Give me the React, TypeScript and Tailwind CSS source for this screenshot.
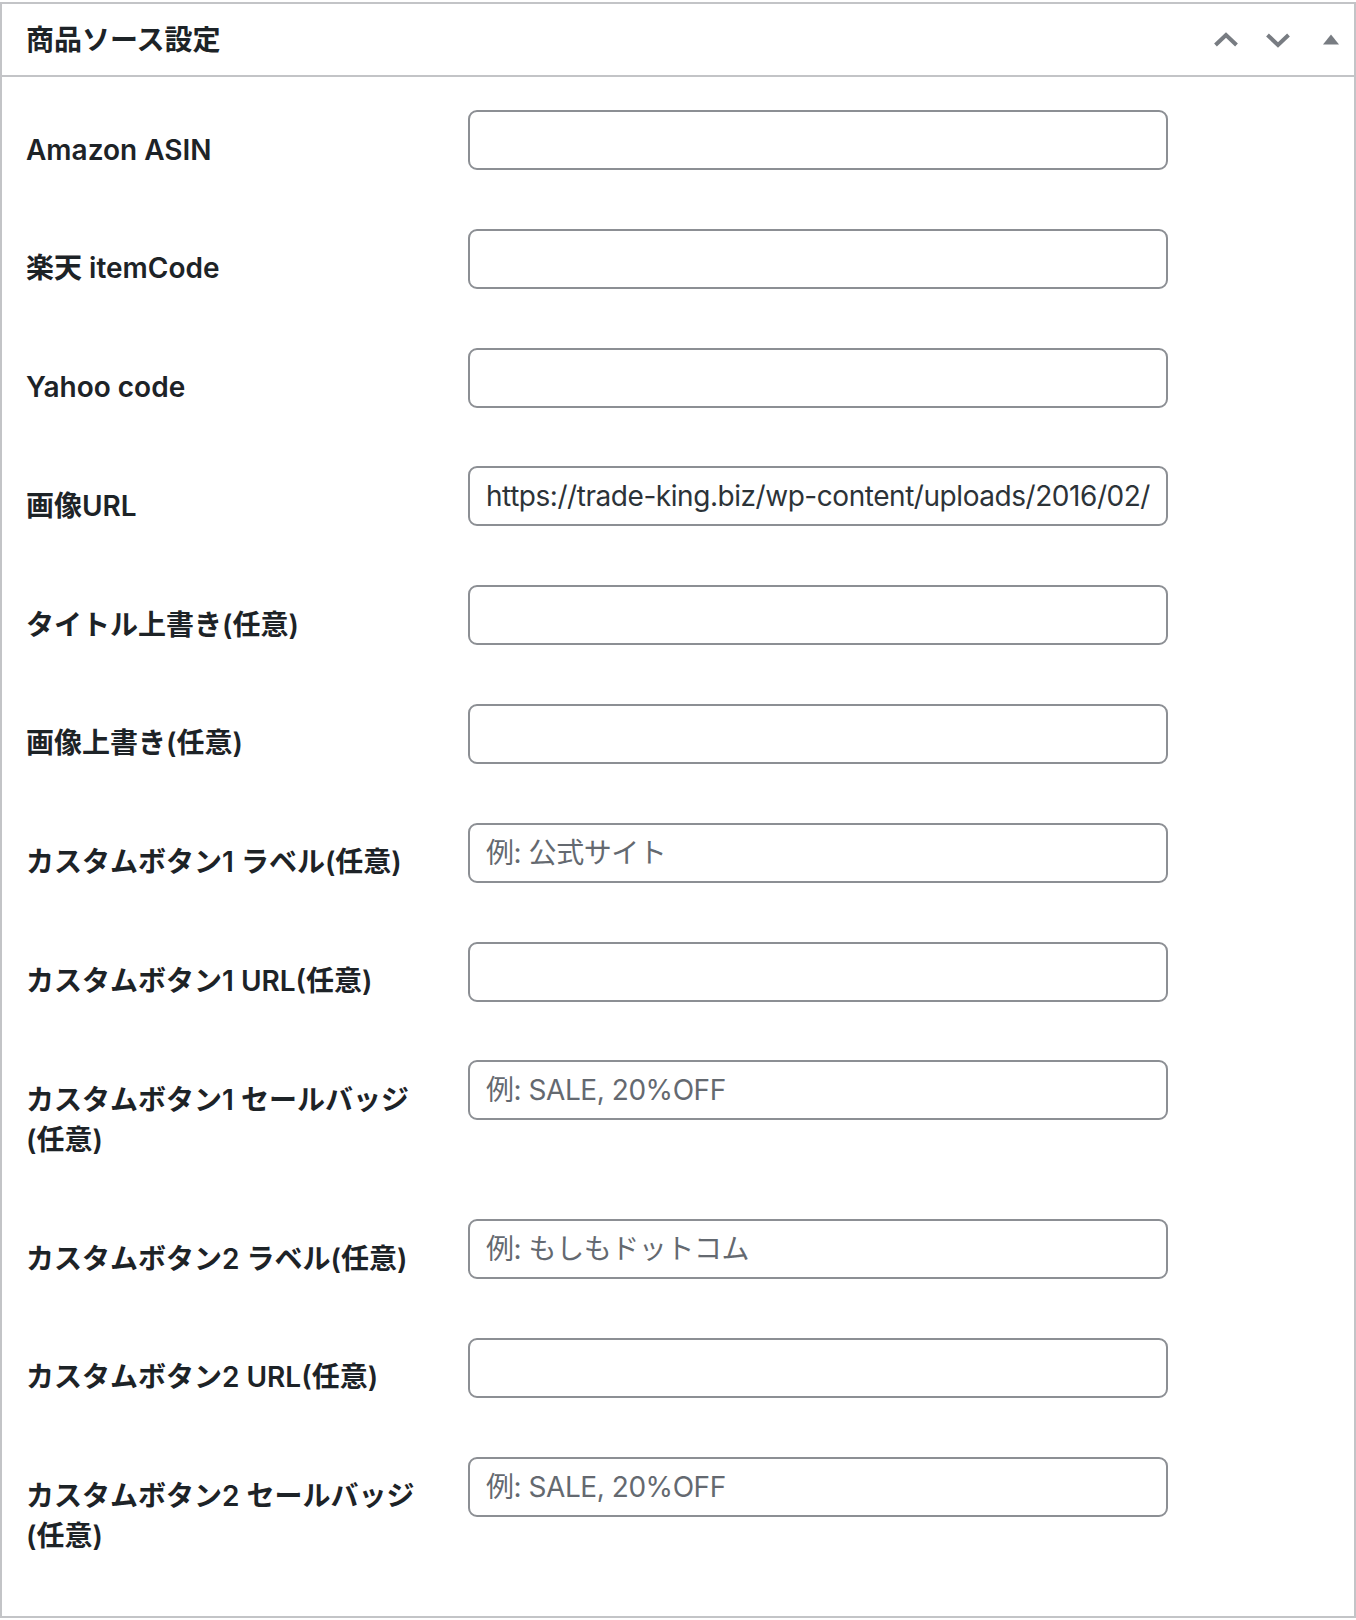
import React from "react";

type Field = {
  label: string;
  value?: string;
  placeholder?: string;
};

const fields: Field[] = [
  { label: "Amazon ASIN" },
  { label: "楽天 itemCode" },
  { label: "Yahoo code" },
  { label: "画像URL", value: "https://trade-king.biz/wp-content/uploads/2016/02/" },
  { label: "タイトル上書き(任意)" },
  { label: "画像上書き(任意)" },
  { label: "カスタムボタン1 ラベル(任意)", placeholder: "例: 公式サイト" },
  { label: "カスタムボタン1 URL(任意)" },
  { label: "カスタムボタン1 セールバッジ(任意)", placeholder: "例: SALE, 20%OFF" },
  { label: "カスタムボタン2 ラベル(任意)", placeholder: "例: もしもドットコム" },
  { label: "カスタムボタン2 URL(任意)" },
  { label: "カスタムボタン2 セールバッジ(任意)", placeholder: "例: SALE, 20%OFF" },
];

function Chevron({ down = false }: { down?: boolean }) {
  return (
    <svg width="26" height="16" viewBox="0 0 26 16" className="block">
      <path
        d={down ? "M2.5 3 L13 13 L23.5 3" : "M2.5 13 L13 3 L23.5 13"}
        fill="none"
        stroke="#787c82"
        strokeWidth="4"
      />
    </svg>
  );
}

function Row({ field }: { field: Field }) {
  return (
    <div className="flex items-start">
      <label className="w-[400px] mr-[42px] pt-[49.5px] pb-[29.3px] text-[28px] leading-[40px] font-semibold text-[#1d2327]">
        {field.label}
      </label>
      <input
        type="text"
        defaultValue={field.value}
        placeholder={field.placeholder}
        className="mt-[30px] h-[60px] w-[700px] rounded-[9px] border-2 border-[#8c8f94] bg-white px-[16px] text-[28px] tracking-[-0.45px] text-[#2c3338] placeholder:text-[#646970] outline-none"
      />
    </div>
  );
}

export default function App() {
  return (
    <div className="min-h-screen bg-white pt-[2px] font-['Inter','Noto_Sans_CJK_JP',sans-serif]">
      <div className="border-2 border-[#c3c4c7] bg-white">
        {/* header */}
        <div className="flex h-[73px] items-center justify-between border-b-2 border-[#c3c4c7] pl-[24px] pr-[15px]">
          <h2 className="text-[28px] font-semibold text-[#1d2327]">商品ソース設定</h2>
          <div className="flex items-center">
            <Chevron />
            <div className="ml-[26px]">
              <Chevron down />
            </div>
            <svg width="16" height="11" viewBox="0 0 16 11" className="ml-[32px] block">
              <polygon points="0,10.5 8,0.5 16,10.5" fill="#787c82" />
            </svg>
          </div>
        </div>

        {/* fields */}
        <div className="px-[24px] pt-[3px] pb-[30px]">
          {fields.map((f) => (
            <Row key={f.label} field={f} />
          ))}
        </div>
      </div>
    </div>
  );
}
